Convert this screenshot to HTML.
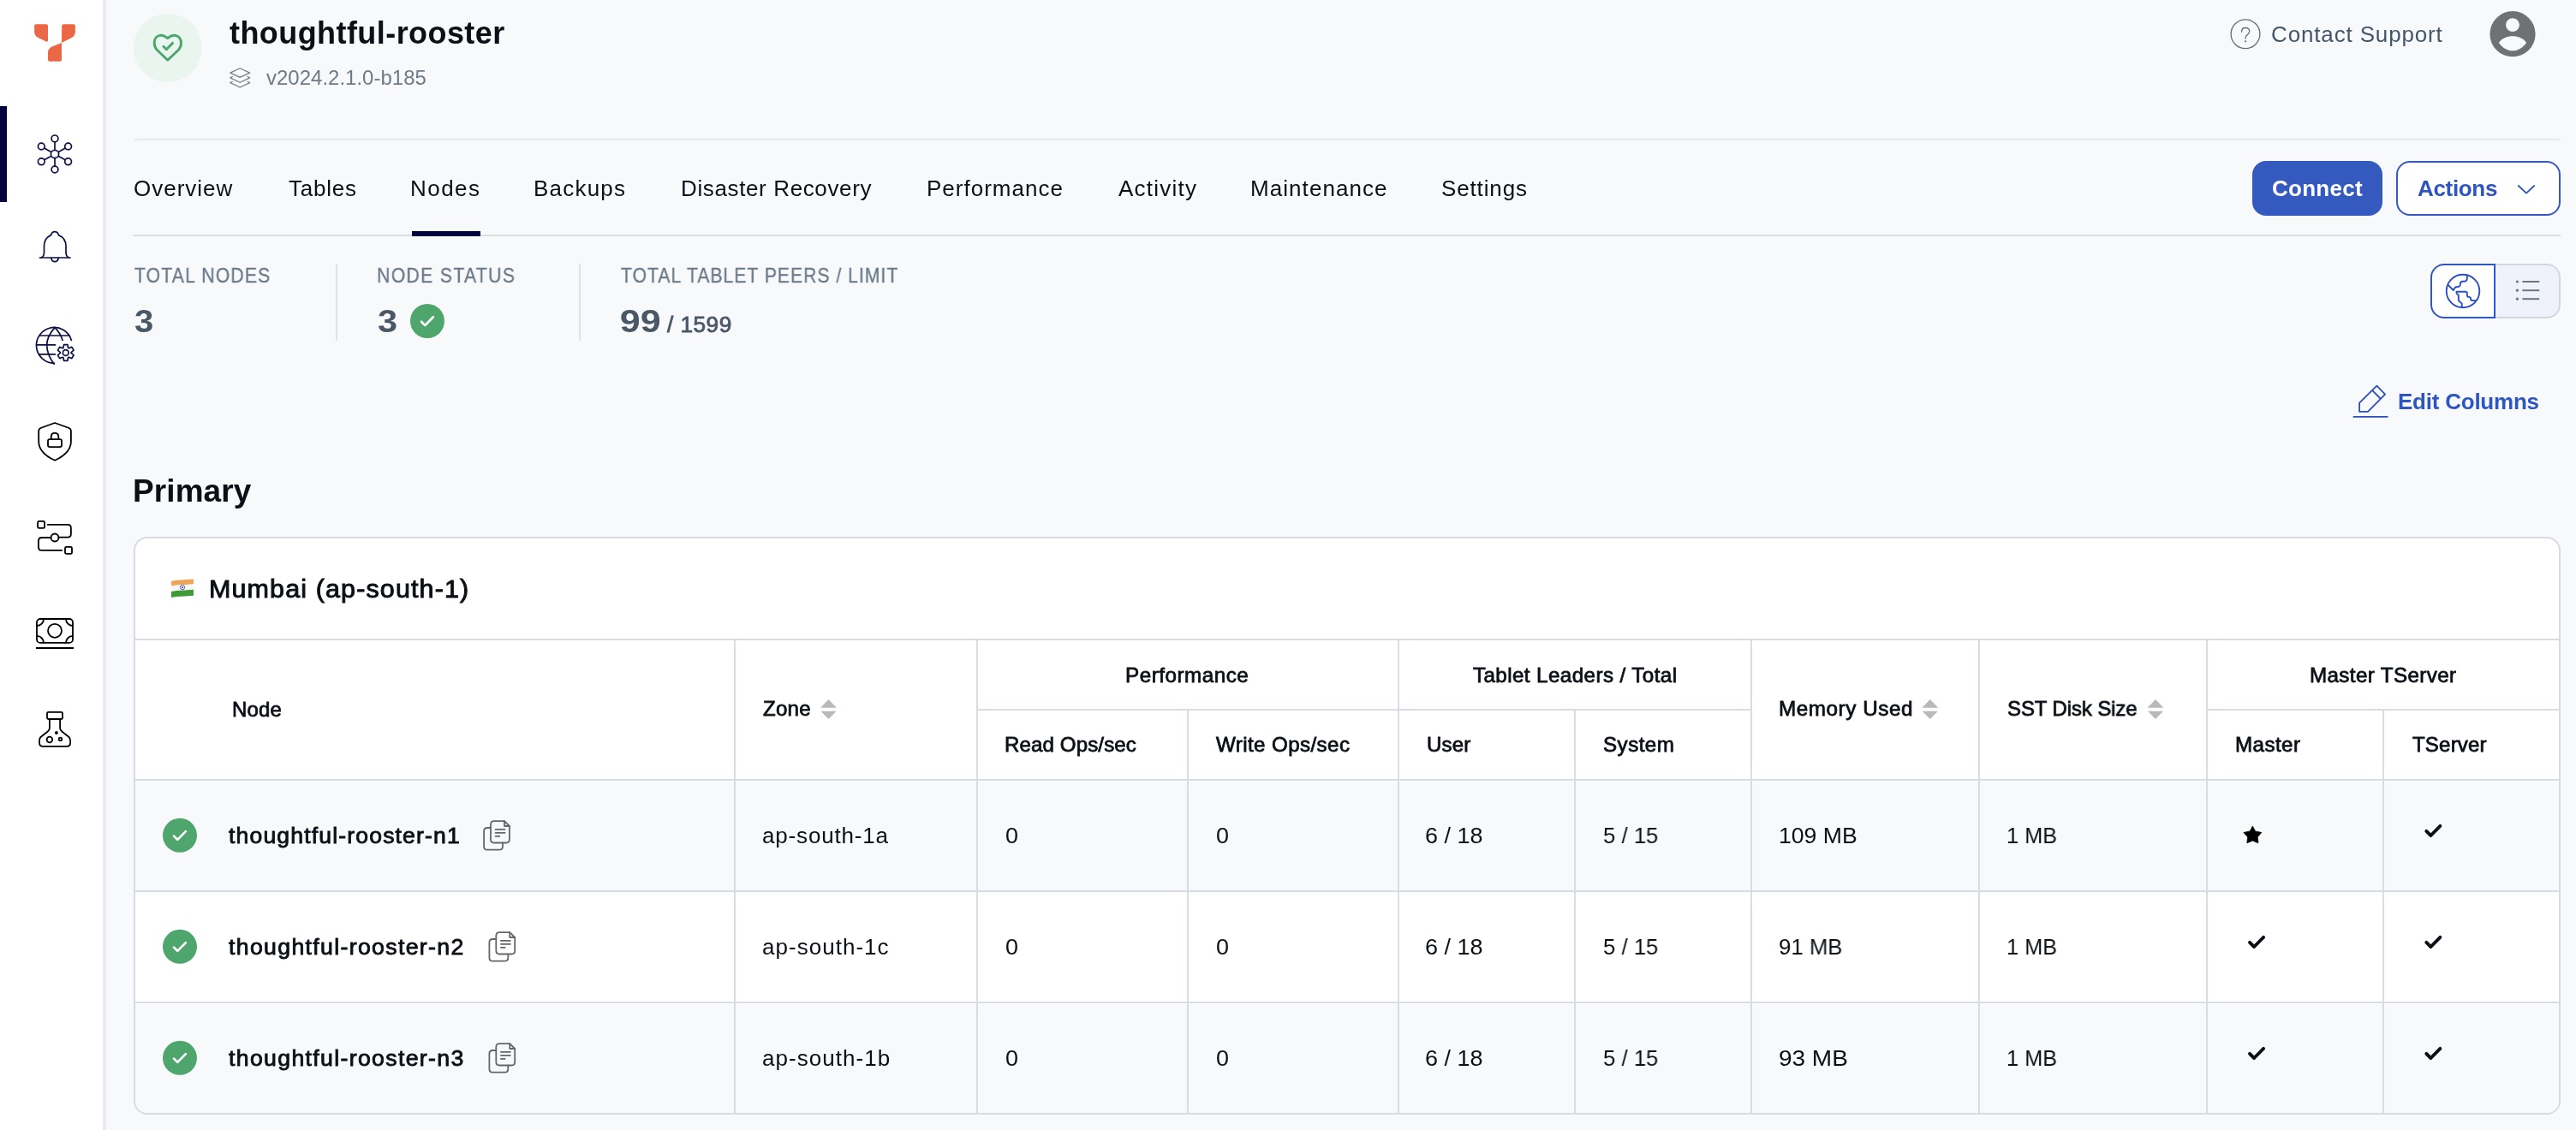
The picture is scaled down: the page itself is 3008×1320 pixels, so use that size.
<!DOCTYPE html>
<html><head><meta charset="utf-8">
<style>
html,body{margin:0;padding:0;}
body{width:3008px;height:1320px;overflow:hidden;background:#f8f9fb;position:relative;font-family:"Liberation Sans",sans-serif;}
.a{position:absolute;}
.t{position:absolute;white-space:nowrap;font-family:"Liberation Sans",sans-serif;will-change:transform;}
</style></head><body>
<!-- sidebar -->
<div class="a" style="left:0;top:0;width:120px;height:1320px;background:#fff;"></div>
<div class="a" style="left:120px;top:0;width:4px;height:1320px;background:#e8ebf0;"></div>
<div class="a" style="left:0;top:124px;width:8px;height:112px;background:#03033d;"></div>
<!-- header -->
<div class="a" style="left:156px;top:16px;width:80px;height:80px;border-radius:50%;background:#ebf5ef;"></div>
<div class="a" style="left:156px;top:162px;width:2834px;height:2px;background:#e6e9ee;"></div>
<div class="a" style="left:156px;top:274px;width:2834px;height:2px;background:#d8dde4;"></div>
<div class="a" style="left:481px;top:270px;width:80px;height:6px;background:#02023e;"></div>
<!-- buttons -->
<div class="a" style="left:2630px;top:188px;width:152px;height:64px;border-radius:16px;background:#355abf;"></div>
<div class="a" style="left:2798px;top:188px;width:188px;height:60px;border-radius:16px;background:#fff;border:2px solid #3559c3;"></div>
<!-- stats dividers -->
<div class="a" style="left:392px;top:308px;width:2px;height:90px;background:#dfe3e8;"></div>
<div class="a" style="left:676px;top:308px;width:2px;height:90px;background:#dfe3e8;"></div>
<!-- toggle -->
<div class="a" style="left:2914px;top:308px;width:74px;height:60px;border:2px solid #d3d7dd;border-left:none;border-radius:0 16px 16px 0;background:#eff2fa;"></div>
<div class="a" style="left:2838px;top:308px;width:72px;height:60px;border:2px solid #3157c2;border-radius:16px 0 0 16px;background:#fff;"></div>
<!-- card -->
<div class="a" style="left:156px;top:627px;width:2830px;height:671px;border:2px solid #d6dbe2;border-radius:16px;background:#fff;overflow:hidden;">
  <div class="a" style="left:0;top:284px;width:2830px;height:128px;background:#f8f9fb;"></div>
  <div class="a" style="left:0;top:544px;width:2830px;height:128px;background:#f8f9fb;"></div>
</div>
<!-- table lines -->
<div class="a" style="left:158px;top:746px;width:2830px;height:2px;background:#d8dde4;"></div>
<div class="a" style="left:158px;top:910px;width:2830px;height:2px;background:#d8dde4;"></div>
<div class="a" style="left:158px;top:1040px;width:2830px;height:2px;background:#d8dde4;"></div>
<div class="a" style="left:158px;top:1170px;width:2830px;height:2px;background:#d8dde4;"></div>
<div class="a" style="left:1142px;top:828px;width:902px;height:2px;background:#d8dde4;"></div>
<div class="a" style="left:2578px;top:828px;width:410px;height:2px;background:#d8dde4;"></div>
<div class="a" style="left:857px;top:748px;width:2px;height:552px;background:#d8dde4;"></div>
<div class="a" style="left:1140px;top:748px;width:2px;height:552px;background:#d8dde4;"></div>
<div class="a" style="left:1386px;top:830px;width:2px;height:470px;background:#d8dde4;"></div>
<div class="a" style="left:1632px;top:748px;width:2px;height:552px;background:#d8dde4;"></div>
<div class="a" style="left:1838px;top:830px;width:2px;height:470px;background:#d8dde4;"></div>
<div class="a" style="left:2044px;top:748px;width:2px;height:552px;background:#d8dde4;"></div>
<div class="a" style="left:2310px;top:748px;width:2px;height:552px;background:#d8dde4;"></div>
<div class="a" style="left:2576px;top:748px;width:2px;height:552px;background:#d8dde4;"></div>
<div class="a" style="left:2782px;top:830px;width:2px;height:470px;background:#d8dde4;"></div>

<svg class="a" style="left:0;top:0" width="3008" height="1320" viewBox="0 0 3008 1320">
<!-- logo -->
<g fill="#eb6846">
<path d="M40.1,30.2 Q40.1,28.2 42.1,28.2 L54,28.2 Q56,28.2 56,30.2 L56,47 Q56,49.4 53.8,48.6 L44.5,44 Q40.1,41.5 40.1,37 Z"/>
<path d="M72.2,30.2 Q72.2,28.2 74.2,28.2 L85.9,28.2 Q87.9,28.2 87.9,30.2 L87.9,37 Q87.9,41.8 83.8,44 L72,50 Z"/>
<path d="M72,50 L72,69.8 Q72,71.8 70,71.8 L58,71.8 Q56,71.8 56,69.8 L56,61.5 Q56,56.6 60.6,54.4 Z"/>
</g>
<!-- network icon -->
<g fill="none" stroke="#0d0f45" stroke-width="1.7">
<circle cx="64" cy="180" r="4.6"/>
<circle cx="64" cy="161.9" r="3.9"/><circle cx="64" cy="198" r="3.9"/>
<circle cx="48.3" cy="171" r="3.9"/><circle cx="79.6" cy="171" r="3.9"/>
<circle cx="48.3" cy="188.8" r="3.9"/><circle cx="79.6" cy="188.8" r="3.9"/>
<path d="M64,165.8 V175.4 M64,184.6 V194.1 M51.7,173 L60,177.7 M76.2,173 L68,177.7 M51.7,186.8 L60,182.3 M76.2,186.8 L68,182.3"/>
</g>
<!-- bell -->
<g fill="none" stroke="#0d0f45" stroke-width="1.7" stroke-linecap="round">
<path d="M46.4,301 H82"/>
<path d="M48,301 Q51.5,299.6 51.5,295 V287.5 Q51.5,278.2 59.6,274.6 Q60.6,270.7 64,270.7 Q67.4,270.7 68.4,274.6 Q77,278.2 77,287.5 V295 Q77,299.6 80.5,301"/>
<path d="M59.8,301.3 Q60.5,305.6 64,305.6 Q67.5,305.6 68.2,301.3"/>
</g>
<!-- globe gear -->
<g fill="none" stroke="#0d0f45" stroke-width="1.7" stroke-linecap="round">
<path d="M63.4,424.3 A20.9,20.9 0 1 1 83.4,397.4"/>
<path d="M46.5,392 H81.3 M42.8,402.9 H64.5 M45.4,413.8 H64.5"/>
<path d="M64,382.6 Q54.7,393 54.7,402.9 Q54.7,414 63.2,425.2"/>
<path d="M64,382.6 Q70.5,389 73,397.4"/>
<path d="M73.94,406.25 L74.57,402.55 L78.93,402.55 L79.56,406.25 L80.33,406.69 L83.84,405.38 L86.03,409.16 L83.13,411.55 L83.13,412.45 L86.03,414.84 L83.84,418.62 L80.33,417.31 L79.56,417.75 L78.93,421.45 L74.57,421.45 L73.94,417.75 L73.17,417.31 L69.66,418.62 L67.47,414.84 L70.37,412.45 L70.37,411.55 L67.47,409.16 L69.66,405.38 L73.17,406.69 Z" stroke-linejoin="round"/>
<circle cx="76.75" cy="412" r="3.4"/>
</g>
<!-- shield -->
<g fill="none" stroke="#000" stroke-width="1.8" stroke-linejoin="round">
<path d="M64,494 L47.5,500 Q45.2,501 45.2,503.5 V515.7 Q45.2,529 64,537.8 Q82.9,529 82.9,515.7 V503.5 Q82.9,501 80.6,500 Z"/>
<rect x="56" y="513.1" width="16" height="9" rx="2"/>
<path d="M59.8,512.8 V510 Q59.8,505.9 64,505.9 Q68.3,505.9 68.3,510 V512.8"/>
</g>
<!-- route -->
<g fill="none" stroke="#000" stroke-width="1.8" stroke-linecap="round">
<rect x="44.1" y="608.9" width="8" height="8" rx="1.5"/>
<rect x="76" y="638.9" width="8" height="8" rx="1.5"/>
<circle cx="64" cy="628" r="4.5"/>
<path d="M55.8,612.9 H79 Q82.9,612.9 82.9,616.8 V623.8 Q82.9,627.7 79,627.7 H68.5"/>
<path d="M59.5,628 H48.9 Q44.9,628 44.9,632 V638.9 Q44.9,642.9 48.9,642.9 H72.2"/>
</g>
<!-- money -->
<g fill="none" stroke="#000" stroke-width="1.8" stroke-linecap="round">
<rect x="43" y="723" width="42" height="27.9" rx="4"/>
<circle cx="64" cy="736.8" r="8"/>
<path d="M51,723.2 A8,8 0 0 1 43.2,731 M77,723.2 A8,8 0 0 0 84.8,731 M43.2,742.9 A8,8 0 0 1 51,750.7 M84.8,742.9 A8,8 0 0 0 77,750.7"/>
<path d="M42.6,757 H85.4"/>
</g>
<!-- flask -->
<g fill="none" stroke="#000" stroke-width="1.8" stroke-linejoin="round">
<rect x="55" y="831.8" width="18" height="8.2" rx="1.5"/>
<path d="M57.9,840 V850.5 Q57.9,852.5 56,854.2 L47.5,861 Q46,862.5 46,865 V867.5 Q46,871.9 50,871.9 H78.1 Q82.1,871.9 82.1,867.5 V865 Q82.1,862.5 80.5,861 L72,854.2 Q70.1,852.5 70.1,850.5 V840"/>
<circle cx="57.9" cy="864" r="3.3"/>
<circle cx="70.5" cy="863.4" r="1.8"/>
</g>
<circle cx="65.9" cy="856" r="1.9" fill="#000"/>

<!-- heart -->
<g fill="none" stroke="#4aa66b" stroke-width="2.9" stroke-linecap="round" stroke-linejoin="round">
<path d="M195.8,44.8 C192.5,41.8 189,41 186.5,41.4 C182.5,42 180.2,46 180.2,50 C180.2,53.5 181.5,56.5 183.5,58.5 L195.8,70.2 L208.2,58.5 C210.2,56.5 211.5,53.5 211.5,50 C211.5,46 209,42 205,41.4 C202.5,41 199,41.8 195.8,44.8 Z"/>
<path d="M190.9,54.3 L194.3,57.7 L201.6,50.4"/>
</g>
<!-- layers -->
<g fill="none" stroke="#74818d" stroke-width="1.25" stroke-linejoin="round" stroke-linecap="round">
<path d="M280.2,79.7 L268.8,85.1 L280.2,90.4 L291.7,85.1 Z"/>
<path d="M271.3,89.6 L268.8,90.9 L280.2,96.3 L291.7,90.9 L289.2,89.6"/>
<path d="M271.3,95.3 L268.8,96.6 L280.2,102 L291.7,96.6 L289.2,95.3"/>
</g>
<!-- help -->
<g fill="none" stroke="#63717d" stroke-width="1.35" stroke-linecap="round">
<circle cx="2622" cy="39.8" r="16.9"/>
<path d="M2617.5,37.3 Q2617.5,32.5 2622,32.5 Q2626.7,32.5 2626.7,36.5 Q2626.7,39 2624.2,40.6 Q2622,42 2622,45"/>
</g>
<circle cx="2622" cy="48.3" r="1.1" fill="#5d6d7b"/>
<!-- avatar -->
<circle cx="2934" cy="39.7" r="26.6" fill="#6f7173"/>
<circle cx="2934" cy="29.2" r="7.9" fill="#f8f9fb"/>
<path d="M2917.8,49.9 C2921.5,44.8 2927.5,42.3 2934,42.3 C2940.5,42.3 2946.5,44.8 2950.1,49.9 C2946,55.5 2940.5,59.2 2934,59.2 C2927.5,59.2 2922,55.5 2917.8,49.9 Z" fill="#f8f9fb"/>
<!-- actions chevron -->
<path d="M2940.8,217 L2950,225.6 L2959.2,217" fill="none" stroke="#2f55c0" stroke-width="1.8" stroke-linecap="round" stroke-linejoin="round"/>
<!-- stat check -->
<circle cx="499" cy="375" r="20" fill="#4ea66d"/>
<path d="M492.05,375.8 L496.3,380.1 L505.9,370.3" fill="none" stroke="#fff" stroke-width="2.7" stroke-linecap="round" stroke-linejoin="round"/>
<!-- toggle icons -->
<g fill="none" stroke="#2a4fc0" stroke-width="1.9" stroke-linejoin="round" stroke-linecap="round">
<circle cx="2876" cy="340" r="19.3"/>
<path d="M2858.4,332.8 L2864.8,339 L2867.1,335.5 L2871.2,334.8 Q2873,334.3 2873,332 V331.5 Q2873,328.8 2875.5,328.8 H2877 Q2880.9,328.8 2880.9,324.4 V321.7"/>
<path d="M2874.7,358.6 V354.6 L2870.8,350.9 V344.7 L2868.5,342.5 V340.7 H2878.8 Q2880.9,340.7 2880.9,343 V345 Q2880.9,346.9 2883,346.9 Q2885.1,347 2885.1,349.3 Q2885.3,351.1 2887.5,351.1 H2891.3"/>
</g>
<g fill="#6b7780">
<circle cx="2939.4" cy="329" r="1.6"/><circle cx="2939.4" cy="339.2" r="1.6"/><circle cx="2939.4" cy="349.2" r="1.6"/>
<rect x="2945.4" y="328" width="19.8" height="2"/><rect x="2945.4" y="338.2" width="19.8" height="2"/><rect x="2945.4" y="348.2" width="19.8" height="2"/>
</g>
<!-- pencil -->
<g fill="none" stroke="#2a4fc0" stroke-width="1.8" stroke-linejoin="round" stroke-linecap="round">
<path d="M2755.1,480.9 V470.7 L2775.4,450.7 L2785.1,460.6 L2765,480.9 Z"/>
<path d="M2770.7,456.6 L2779.1,465"/>
<path d="M2748.4,486.8 H2787.8"/>
</g>
<!-- flag -->
<g>
<path d="M200.0,678.8 C208.0,677.0 216.0,677.8 226.0,676.6 L226.0,682.4 C216.0,683.6 208.0,682.8 200.0,684.6 Z" fill="#f0a455"/><path d="M200.0,684.4 C208.0,682.6 216.0,683.4 226.0,682.2 L226.0,689.0 C216.0,690.2 208.0,689.4 200.0,691.2 Z" fill="#f7f7f7"/><path d="M200.0,691.0 C208.0,689.2 216.0,690.0 226.0,688.8 L226.0,695.8 C216.0,697.0 208.0,696.2 200.0,698.0 Z" fill="#3f9b37"/><circle cx="213" cy="686.2" r="2.6" fill="none" stroke="#2b3aa6" stroke-width="0.8"/>
<circle cx="213" cy="686.2" r="0.9" fill="#2b3aa6"/>
</g>
<!-- sort icons -->
<g fill="#b9b9b9">
<path d="M967.5,817 L976.9,826.7 H958.1 Z M958.4,830.7 H976.6 L967.5,840 Z"/>
<path d="M2253.8,817 L2263.2,826.7 H2244.4 Z M2244.7,830.7 H2262.9 L2253.8,840 Z"/>
<path d="M2517,817 L2526.4,826.7 H2507.6 Z M2507.9,830.7 H2526.1 L2517,840 Z"/>
</g>
<circle cx="210" cy="975.8" r="20" fill="#4ea66d"/>
<path d="M203.05,976.60 L207.3,980.90 L216.9,971.10" fill="none" stroke="#fff" stroke-width="2.7" stroke-linecap="round" stroke-linejoin="round"/>
<g transform="translate(0.0,0)" fill="none" stroke="#636769" stroke-width="1.8" stroke-linejoin="round" stroke-linecap="round"><path d="M573,967 H569.1 Q565.1,967 565.1,971 V988.7 Q565.1,992.7 569.1,992.7 H583 Q587,992.7 587,988.7 V984.7"/><path d="M589,959.1 H577 Q573,959.1 573,963.1 V980.5 Q573,984.5 577,984.5 H590.9 Q594.9,984.5 594.9,980.5 V965 Z"/><path d="M589,959.1 V965 H594.9"/><path d="M578.6,968.8 H589.6 M578.6,972.8 H589.6 M578.6,976.8 H583.4"/></g>
<path d="M2833.3,970.9 L2838.4,976.0 L2849.4,964.9" fill="none" stroke="#0b1016" stroke-width="3.9" stroke-linecap="round" stroke-linejoin="round"/>
<circle cx="210" cy="1105.8" r="20" fill="#4ea66d"/>
<path d="M203.05,1106.60 L207.3,1110.90 L216.9,1101.10" fill="none" stroke="#fff" stroke-width="2.7" stroke-linecap="round" stroke-linejoin="round"/>
<g transform="translate(6.3,130)" fill="none" stroke="#636769" stroke-width="1.8" stroke-linejoin="round" stroke-linecap="round"><path d="M573,967 H569.1 Q565.1,967 565.1,971 V988.7 Q565.1,992.7 569.1,992.7 H583 Q587,992.7 587,988.7 V984.7"/><path d="M589,959.1 H577 Q573,959.1 573,963.1 V980.5 Q573,984.5 577,984.5 H590.9 Q594.9,984.5 594.9,980.5 V965 Z"/><path d="M589,959.1 V965 H594.9"/><path d="M578.6,968.8 H589.6 M578.6,972.8 H589.6 M578.6,976.8 H583.4"/></g>
<path d="M2833.3,1100.9 L2838.4,1106.0 L2849.4,1094.9" fill="none" stroke="#0b1016" stroke-width="3.9" stroke-linecap="round" stroke-linejoin="round"/>
<path d="M2627,1100.9 L2632.1,1106.0 L2643.1,1094.9" fill="none" stroke="#0b1016" stroke-width="3.9" stroke-linecap="round" stroke-linejoin="round"/>
<circle cx="210" cy="1235.8" r="20" fill="#4ea66d"/>
<path d="M203.05,1236.60 L207.3,1240.90 L216.9,1231.10" fill="none" stroke="#fff" stroke-width="2.7" stroke-linecap="round" stroke-linejoin="round"/>
<g transform="translate(6.3,260)" fill="none" stroke="#636769" stroke-width="1.8" stroke-linejoin="round" stroke-linecap="round"><path d="M573,967 H569.1 Q565.1,967 565.1,971 V988.7 Q565.1,992.7 569.1,992.7 H583 Q587,992.7 587,988.7 V984.7"/><path d="M589,959.1 H577 Q573,959.1 573,963.1 V980.5 Q573,984.5 577,984.5 H590.9 Q594.9,984.5 594.9,980.5 V965 Z"/><path d="M589,959.1 V965 H594.9"/><path d="M578.6,968.8 H589.6 M578.6,972.8 H589.6 M578.6,976.8 H583.4"/></g>
<path d="M2833.3,1230.9 L2838.4,1236.0 L2849.4,1224.9" fill="none" stroke="#0b1016" stroke-width="3.9" stroke-linecap="round" stroke-linejoin="round"/>
<path d="M2627,1230.9 L2632.1,1236.0 L2643.1,1224.9" fill="none" stroke="#0b1016" stroke-width="3.9" stroke-linecap="round" stroke-linejoin="round"/>
<path d="M2630.4,965.1 L2633.5,970.9 L2640.8,972.5 L2636.2,977.7 L2636.9,984.7 L2630.4,982 L2623.9,984.7 L2624.6,977.7 L2619.9,972.5 L2627.3,970.9 Z" fill="#000" stroke="#000" stroke-width="0.8" stroke-linejoin="round"/>
</svg>
<div class="t" style="left:268.40px;top:21.40px;font-size:36px;line-height:36px;font-weight:700;color:#0b1016;letter-spacing:0.43px;">thoughtful-rooster</div>
<div class="t" style="left:311.00px;top:79.00px;font-size:24px;line-height:24px;font-weight:400;color:#6c7b88;letter-spacing:-0.00px;">v2024.2.1.0-b185</div>
<div class="t" style="left:2652.40px;top:27.00px;font-size:26px;line-height:26px;font-weight:400;color:#44566a;letter-spacing:0.85px;">Contact Support</div>
<div class="t" style="left:155.80px;top:206.80px;font-size:26px;line-height:26px;font-weight:400;color:#0b1016;letter-spacing:1.00px;">Overview</div>
<div class="t" style="left:337.00px;top:206.80px;font-size:26px;line-height:26px;font-weight:400;color:#0b1016;letter-spacing:0.77px;">Tables</div>
<div class="t" style="left:479.00px;top:206.80px;font-size:26px;line-height:26px;font-weight:400;color:#0b1016;letter-spacing:1.46px;">Nodes</div>
<div class="t" style="left:623.00px;top:206.80px;font-size:26px;line-height:26px;font-weight:400;color:#0b1016;letter-spacing:1.21px;">Backups</div>
<div class="t" style="left:794.50px;top:206.80px;font-size:26px;line-height:26px;font-weight:400;color:#0b1016;letter-spacing:0.63px;">Disaster Recovery</div>
<div class="t" style="left:1081.50px;top:206.80px;font-size:26px;line-height:26px;font-weight:400;color:#0b1016;letter-spacing:1.01px;">Performance</div>
<div class="t" style="left:1306.00px;top:206.80px;font-size:26px;line-height:26px;font-weight:400;color:#0b1016;letter-spacing:1.24px;">Activity</div>
<div class="t" style="left:1460.00px;top:206.80px;font-size:26px;line-height:26px;font-weight:400;color:#0b1016;letter-spacing:1.06px;">Maintenance</div>
<div class="t" style="left:1683.00px;top:206.80px;font-size:26px;line-height:26px;font-weight:400;color:#0b1016;letter-spacing:0.86px;">Settings</div>
<div class="t" style="left:2652.50px;top:207.00px;font-size:26px;line-height:26px;font-weight:700;color:#ffffff;letter-spacing:0.26px;">Connect</div>
<div class="t" style="left:2823.40px;top:207.00px;font-size:26px;line-height:26px;font-weight:700;color:#2f55c0;letter-spacing:-0.33px;">Actions</div>
<div class="t" style="left:156.78px;top:309.80px;font-size:24px;line-height:24px;font-weight:400;color:#6b7a88;letter-spacing:1.35px;-webkit-text-stroke:0.36px #6b7a88;transform:scaleX(0.8800);transform-origin:-0.00px 0;">TOTAL NODES</div>
<div class="t" style="left:439.78px;top:309.80px;font-size:24px;line-height:24px;font-weight:400;color:#6b7a88;letter-spacing:1.56px;-webkit-text-stroke:0.36px #6b7a88;transform:scaleX(0.8800);transform-origin:1.00px 0;">NODE STATUS</div>
<div class="t" style="left:724.78px;top:309.80px;font-size:24px;line-height:24px;font-weight:400;color:#6b7a88;letter-spacing:1.16px;-webkit-text-stroke:0.36px #6b7a88;transform:scaleX(0.8800);transform-origin:-0.00px 0;">TOTAL TABLET PEERS / LIMIT</div>
<div class="t" style="left:156.50px;top:357.70px;font-size:36px;line-height:36px;font-weight:700;color:#4a5866;letter-spacing:0.00px;transform:scaleX(1.1158);transform-origin:-0.00px 0;">3</div>
<div class="t" style="left:440.60px;top:357.70px;font-size:36px;line-height:36px;font-weight:700;color:#4a5866;letter-spacing:0.00px;transform:scaleX(1.1526);transform-origin:-0.00px 0;">3</div>
<div class="t" style="left:723.60px;top:357.70px;font-size:36px;line-height:36px;font-weight:700;color:#4a5866;letter-spacing:0.00px;transform:scaleX(1.1941);transform-origin:1.00px 0;">99</div>
<div class="t" style="left:779.42px;top:365.70px;font-size:26px;line-height:26px;font-weight:400;color:#4a5866;letter-spacing:0.47px;-webkit-text-stroke:0.83px #4a5866;transform:scaleX(1.0082);transform-origin:-0.00px 0;">/ 1599</div>
<div class="t" style="left:2800.30px;top:456.00px;font-size:26px;line-height:26px;font-weight:700;color:#2f55c0;letter-spacing:-0.23px;">Edit Columns</div>
<div class="t" style="left:155.00px;top:554.70px;font-size:37px;line-height:37px;font-weight:700;color:#0b1016;letter-spacing:0.09px;">Primary</div>
<div class="t" style="left:244.38px;top:673.00px;font-size:30px;line-height:30px;font-weight:400;color:#0b1016;letter-spacing:1.08px;-webkit-text-stroke:0.96px #0b1016;transform:scaleX(1.0179);transform-origin:2.00px 0;">Mumbai (ap-south-1)</div>
<div class="t" style="left:270.78px;top:817.00px;font-size:24px;line-height:24px;font-weight:400;color:#0b1016;letter-spacing:0.11px;-webkit-text-stroke:0.77px #0b1016;transform:scaleX(1.0014);transform-origin:1.00px 0;">Node</div>
<div class="t" style="left:891.38px;top:816.00px;font-size:24px;line-height:24px;font-weight:400;color:#0b1016;letter-spacing:0.23px;-webkit-text-stroke:0.77px #0b1016;transform:scaleX(1.0032);transform-origin:-0.00px 0;">Zone</div>
<div class="t" style="left:1314.08px;top:777.00px;font-size:24px;line-height:24px;font-weight:400;color:#0b1016;letter-spacing:0.51px;-webkit-text-stroke:0.77px #0b1016;transform:scaleX(1.0095);transform-origin:1.00px 0;">Performance</div>
<div class="t" style="left:1720.38px;top:777.00px;font-size:24px;line-height:24px;font-weight:400;color:#0b1016;letter-spacing:0.39px;-webkit-text-stroke:0.77px #0b1016;transform:scaleX(1.0092);transform-origin:-0.00px 0;">Tablet Leaders / Total</div>
<div class="t" style="left:1173.18px;top:858.00px;font-size:24px;line-height:24px;font-weight:400;color:#0b1016;letter-spacing:0.13px;-webkit-text-stroke:0.77px #0b1016;transform:scaleX(1.0025);transform-origin:1.00px 0;">Read Ops/sec</div>
<div class="t" style="left:1420.38px;top:858.00px;font-size:24px;line-height:24px;font-weight:400;color:#0b1016;letter-spacing:0.38px;-webkit-text-stroke:0.77px #0b1016;transform:scaleX(1.0076);transform-origin:-0.00px 0;">Write Ops/sec</div>
<div class="t" style="left:1665.68px;top:858.00px;font-size:24px;line-height:24px;font-weight:400;color:#0b1016;letter-spacing:0.15px;-webkit-text-stroke:0.77px #0b1016;transform:scaleX(1.0022);transform-origin:1.00px 0;">User</div>
<div class="t" style="left:1871.68px;top:858.00px;font-size:24px;line-height:24px;font-weight:400;color:#0b1016;letter-spacing:0.46px;-webkit-text-stroke:0.77px #0b1016;transform:scaleX(1.0075);transform-origin:1.00px 0;">System</div>
<div class="t" style="left:2077.38px;top:816.00px;font-size:24px;line-height:24px;font-weight:400;color:#0b1016;letter-spacing:0.56px;-webkit-text-stroke:0.77px #0b1016;transform:scaleX(1.0095);transform-origin:1.00px 0;">Memory Used</div>
<div class="t" style="left:2343.68px;top:816.00px;font-size:24px;line-height:24px;font-weight:400;color:#0b1016;letter-spacing:-0.09px;-webkit-text-stroke:0.77px #0b1016;transform:scaleX(0.9983);transform-origin:1.00px 0;">SST Disk Size</div>
<div class="t" style="left:2696.68px;top:777.00px;font-size:24px;line-height:24px;font-weight:400;color:#0b1016;letter-spacing:0.38px;-webkit-text-stroke:0.77px #0b1016;transform:scaleX(1.0076);transform-origin:1.00px 0;">Master TServer</div>
<div class="t" style="left:2610.38px;top:858.00px;font-size:24px;line-height:24px;font-weight:400;color:#0b1016;letter-spacing:0.41px;-webkit-text-stroke:0.77px #0b1016;transform:scaleX(1.0071);transform-origin:1.00px 0;">Master</div>
<div class="t" style="left:2817.38px;top:858.00px;font-size:24px;line-height:24px;font-weight:400;color:#0b1016;letter-spacing:0.17px;-webkit-text-stroke:0.77px #0b1016;transform:scaleX(1.0030);transform-origin:-0.00px 0;">TServer</div>
<div class="t" style="left:266.72px;top:963.20px;font-size:26px;line-height:26px;font-weight:400;color:#0b1016;letter-spacing:1.11px;-webkit-text-stroke:0.83px #0b1016;transform:scaleX(1.0236);transform-origin:-0.00px 0;">thoughtful-rooster-n1</div>
<div class="t" style="left:890.30px;top:963.20px;font-size:26px;line-height:26px;font-weight:400;color:#0b1016;letter-spacing:0.83px;">ap-south-1a</div>
<div class="t" style="left:1173.60px;top:963.20px;font-size:26px;line-height:26px;font-weight:400;color:#0b1016;letter-spacing:0.00px;transform:scaleX(1.0385);transform-origin:1.00px 0;">0</div>
<div class="t" style="left:1419.60px;top:963.20px;font-size:26px;line-height:26px;font-weight:400;color:#0b1016;letter-spacing:0.00px;transform:scaleX(1.0385);transform-origin:1.00px 0;">0</div>
<div class="t" style="left:1664.00px;top:963.20px;font-size:26px;line-height:26px;font-weight:400;color:#0b1016;letter-spacing:0.00px;transform:scaleX(1.0379);transform-origin:1.00px 0;">6 / 18</div>
<div class="t" style="left:1871.60px;top:963.20px;font-size:26px;line-height:26px;font-weight:400;color:#0b1016;letter-spacing:0.00px;transform:scaleX(0.9891);transform-origin:1.00px 0;">5 / 15</div>
<div class="t" style="left:2077.20px;top:963.20px;font-size:26px;line-height:26px;font-weight:400;color:#0b1016;letter-spacing:0.00px;transform:scaleX(1.0234);transform-origin:1.00px 0;">109 MB</div>
<div class="t" style="left:2343.00px;top:963.20px;font-size:26px;line-height:26px;font-weight:400;color:#0b1016;letter-spacing:0.00px;transform:scaleX(0.9736);transform-origin:1.00px 0;">1 MB</div>
<div class="t" style="left:266.72px;top:1093.20px;font-size:26px;line-height:26px;font-weight:400;color:#0b1016;letter-spacing:1.28px;-webkit-text-stroke:0.83px #0b1016;transform:scaleX(1.0274);transform-origin:-0.00px 0;">thoughtful-rooster-n2</div>
<div class="t" style="left:890.30px;top:1093.20px;font-size:26px;line-height:26px;font-weight:400;color:#0b1016;letter-spacing:1.03px;">ap-south-1c</div>
<div class="t" style="left:1173.60px;top:1093.20px;font-size:26px;line-height:26px;font-weight:400;color:#0b1016;letter-spacing:0.00px;transform:scaleX(1.0385);transform-origin:1.00px 0;">0</div>
<div class="t" style="left:1419.60px;top:1093.20px;font-size:26px;line-height:26px;font-weight:400;color:#0b1016;letter-spacing:0.00px;transform:scaleX(1.0385);transform-origin:1.00px 0;">0</div>
<div class="t" style="left:1664.00px;top:1093.20px;font-size:26px;line-height:26px;font-weight:400;color:#0b1016;letter-spacing:0.00px;transform:scaleX(1.0379);transform-origin:1.00px 0;">6 / 18</div>
<div class="t" style="left:1871.60px;top:1093.20px;font-size:26px;line-height:26px;font-weight:400;color:#0b1016;letter-spacing:0.00px;transform:scaleX(0.9891);transform-origin:1.00px 0;">5 / 15</div>
<div class="t" style="left:2077.20px;top:1093.20px;font-size:26px;line-height:26px;font-weight:400;color:#0b1016;letter-spacing:0.00px;transform:scaleX(0.9904);transform-origin:1.00px 0;">91 MB</div>
<div class="t" style="left:2343.00px;top:1093.20px;font-size:26px;line-height:26px;font-weight:400;color:#0b1016;letter-spacing:0.00px;transform:scaleX(0.9736);transform-origin:1.00px 0;">1 MB</div>
<div class="t" style="left:266.72px;top:1223.20px;font-size:26px;line-height:26px;font-weight:400;color:#0b1016;letter-spacing:1.28px;-webkit-text-stroke:0.83px #0b1016;transform:scaleX(1.0274);transform-origin:-0.00px 0;">thoughtful-rooster-n3</div>
<div class="t" style="left:890.30px;top:1223.20px;font-size:26px;line-height:26px;font-weight:400;color:#0b1016;letter-spacing:1.04px;">ap-south-1b</div>
<div class="t" style="left:1173.60px;top:1223.20px;font-size:26px;line-height:26px;font-weight:400;color:#0b1016;letter-spacing:0.00px;transform:scaleX(1.0385);transform-origin:1.00px 0;">0</div>
<div class="t" style="left:1419.60px;top:1223.20px;font-size:26px;line-height:26px;font-weight:400;color:#0b1016;letter-spacing:0.00px;transform:scaleX(1.0385);transform-origin:1.00px 0;">0</div>
<div class="t" style="left:1664.00px;top:1223.20px;font-size:26px;line-height:26px;font-weight:400;color:#0b1016;letter-spacing:0.00px;transform:scaleX(1.0379);transform-origin:1.00px 0;">6 / 18</div>
<div class="t" style="left:1871.60px;top:1223.20px;font-size:26px;line-height:26px;font-weight:400;color:#0b1016;letter-spacing:0.00px;transform:scaleX(0.9891);transform-origin:1.00px 0;">5 / 15</div>
<div class="t" style="left:2077.20px;top:1223.20px;font-size:26px;line-height:26px;font-weight:400;color:#0b1016;letter-spacing:0.00px;transform:scaleX(1.0769);transform-origin:1.00px 0;">93 MB</div>
<div class="t" style="left:2343.00px;top:1223.20px;font-size:26px;line-height:26px;font-weight:400;color:#0b1016;letter-spacing:0.00px;transform:scaleX(0.9736);transform-origin:1.00px 0;">1 MB</div>
</body></html>
